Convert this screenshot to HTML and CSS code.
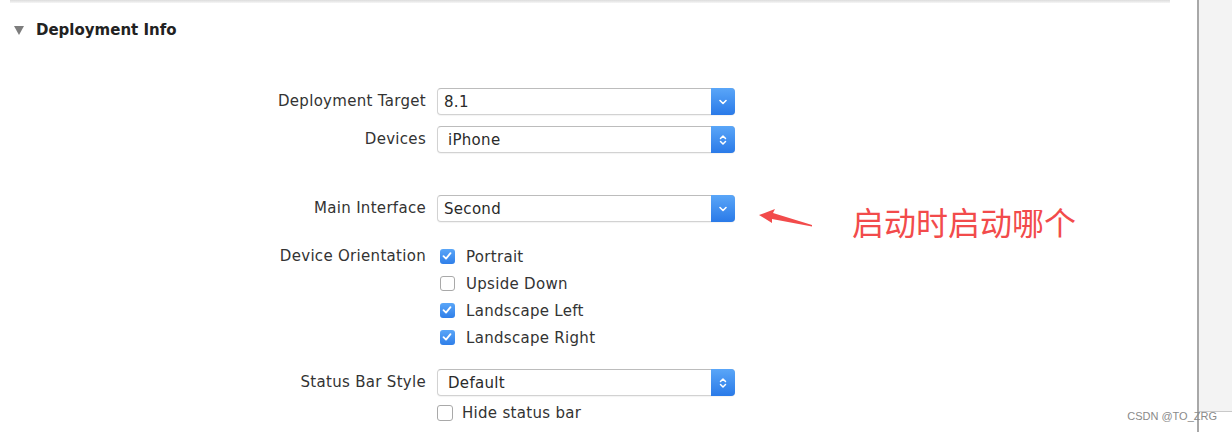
FILE: index.html
```html
<!DOCTYPE html>
<html lang="zh-CN">
<head>
    <meta charset="UTF-8">
    <meta name="viewport" content="width=device-width, initial-scale=1.0">
    <title>Deployment Info</title>
    <link rel="stylesheet" href="styles.css">
</head>
<body>
    <div class="page">
        <div class="main">
            <div class="topline"></div>
            <div class="section-head">
                <span class="disclosure"></span>
                <span class="section-title">Deployment Info</span>
            </div>

            <div class="form">
                <div class="row row-first">
                    <label class="label">Deployment Target</label>
                    <div class="select">
                        <span class="select-value">8.1</span>
                        <span class="select-btn">
                            <svg width="10" height="8" viewBox="0 0 10 8"><path d="M2 2.5 L5 5.5 L8 2.5" fill="none" stroke="#fff" stroke-width="1.6" stroke-linecap="round" stroke-linejoin="round"/></svg>
                        </span>
                    </div>
                </div>

                <div class="row row-tight">
                    <label class="label">Devices</label>
                    <div class="select">
                        <span class="select-value value-wide">iPhone</span>
                        <span class="select-btn">
                            <svg width="10" height="14" viewBox="0 0 10 14"><path d="M2.5 5.5 L5 3 L7.5 5.5 M2.5 8.5 L5 11 L7.5 8.5" fill="none" stroke="#fff" stroke-width="1.5" stroke-linecap="round" stroke-linejoin="round"/></svg>
                        </span>
                    </div>
                </div>

                <div class="row row-wide">
                    <label class="label">Main Interface</label>
                    <div class="select">
                        <span class="select-value">Second</span>
                        <span class="select-btn">
                            <svg width="10" height="8" viewBox="0 0 10 8"><path d="M2 2.5 L5 5.5 L8 2.5" fill="none" stroke="#fff" stroke-width="1.6" stroke-linecap="round" stroke-linejoin="round"/></svg>
                        </span>
                    </div>
                    <div class="note">
                        <svg class="note-arrow" width="60" height="30" viewBox="0 0 60 30">
                            <polygon points="4,13 20,7 18,11 57,23 57,24.5 17,17 17,21" fill="#f24b4b"/>
                        </svg>
                        <span class="note-text">启动时启动哪个</span>
                    </div>
                </div>

                <div class="row row-orient">
                    <label class="label">Device Orientation</label>
                    <div class="checks">
                        <div class="check"><span class="box checked"><svg width="14" height="14" viewBox="0 0 14 14"><path d="M3.5 7.2 L6 9.6 L10.5 4.2" fill="none" stroke="#fff" stroke-width="1.8" stroke-linecap="round" stroke-linejoin="round"/></svg></span>Portrait</div>
                        <div class="check"><span class="box"></span>Upside Down</div>
                        <div class="check"><span class="box checked"><svg width="14" height="14" viewBox="0 0 14 14"><path d="M3.5 7.2 L6 9.6 L10.5 4.2" fill="none" stroke="#fff" stroke-width="1.8" stroke-linecap="round" stroke-linejoin="round"/></svg></span>Landscape Left</div>
                        <div class="check"><span class="box checked"><svg width="14" height="14" viewBox="0 0 14 14"><path d="M3.5 7.2 L6 9.6 L10.5 4.2" fill="none" stroke="#fff" stroke-width="1.8" stroke-linecap="round" stroke-linejoin="round"/></svg></span>Landscape Right</div>
                    </div>
                </div>

                <div class="row row-status">
                    <label class="label">Status Bar Style</label>
                    <div class="select">
                        <span class="select-value value-wide">Default</span>
                        <span class="select-btn">
                            <svg width="10" height="14" viewBox="0 0 10 14"><path d="M2.5 5.5 L5 3 L7.5 5.5 M2.5 8.5 L5 11 L7.5 8.5" fill="none" stroke="#fff" stroke-width="1.5" stroke-linecap="round" stroke-linejoin="round"/></svg>
                        </span>
                    </div>
                </div>

                <div class="row row-hide">
                    <span class="label"></span>
                    <div class="check check-hide"><span class="box"></span>Hide status bar</div>
                </div>
            </div>
        </div>

        <div class="side">
            <div class="side-panel"></div>
        </div>
    </div>
    <div class="watermark">CSDN @TO_ZRG</div>
</body>
</html>
```

FILE: styles.css
```css
body {
    margin: 0;
    background-color: #fff;
    font-family: "DejaVu Sans", Verdana, sans-serif;
    color: #333;
    overflow: hidden;
}
.page {
    display: flex;
    height: 432px;
}
.main {
    flex: 0 0 1197px;
}
.topline {
    height: 3px;
    margin-left: 10px;
    width: 1160px;
    background: linear-gradient(#dcdcdc, #f6f6f6);
}
.section-head {
    display: flex;
    align-items: center;
    height: 24px;
    margin-top: 15px;
    padding-left: 14px;
}
.disclosure {
    width: 0;
    height: 0;
    border-left: 5px solid transparent;
    border-right: 5px solid transparent;
    border-top: 9px solid #7d7d7d;
    margin-right: 12px;
    margin-top: 1px;
}
.section-title {
    font-size: 15px;
    font-weight: bold;
    color: #222;
}
.form {
    margin-top: 46px;
}
.row {
    display: flex;
    align-items: center;
    height: 27px;
}
.row-tight {
    margin-top: 11px;
}
.row-wide {
    margin-top: 42px;
}
.row-orient {
    margin-top: 21px;
    align-items: flex-start;
    height: auto;
}
.row-status {
    margin-top: 18px;
}
.row-hide {
    margin-top: 3px;
}
.label {
    flex: 0 0 426px;
    margin-right: 11px;
    text-align: right;
    font-size: 15px;
    letter-spacing: 0.3px;
    line-height: 27px;
    color: #333;
}
.select {
    display: flex;
    align-items: center;
    width: 298px;
    height: 27px;
    box-sizing: border-box;
    border: 1px solid #d2d2d2;
    border-top-color: #bcbcbc;
    border-radius: 4px;
    background-color: #fff;
    box-shadow: 0 1px 1px rgba(0, 0, 0, 0.05);
}
.select-value {
    flex: 1;
    padding-left: 6px;
    font-size: 15px;
    letter-spacing: 0.3px;
    color: #2a2a2a;
}
.value-wide {
    padding-left: 10px;
}
.select-btn {
    display: flex;
    align-items: center;
    justify-content: center;
    width: 24px;
    height: 27px;
    margin-right: -1px;
    margin-top: -1px;
    margin-bottom: -1px;
    border-radius: 0 4px 4px 0;
    background: linear-gradient(#5aa6f8, #2a7ae8);
}
.note {
    display: flex;
    align-items: flex-start;
    align-self: flex-start;
    height: 27px;
}
.note-arrow {
    margin-left: 20px;
    margin-top: 7px;
}
.note-text {
    margin-left: 37px;
    margin-top: 10px;
    font-family: "Noto Sans CJK SC", sans-serif;
    font-size: 32px;
    line-height: 32px;
    color: #f24b4b;
}
.checks {
    padding-left: 3px;
}
.check {
    display: flex;
    align-items: center;
    height: 27px;
    font-size: 15px;
    letter-spacing: 0.3px;
    color: #333;
}
.box {
    display: inline-flex;
    width: 15px;
    height: 15px;
    box-sizing: border-box;
    border: 1px solid #a9a9a9;
    border-radius: 3px;
    background-color: #fff;
    margin-right: 11px;
}
.box.checked {
    border: none;
    background: linear-gradient(#5aa6f8, #2f7fe9);
}
.check-hide .box {
    width: 16px;
    height: 16px;
    margin-right: 9px;
}
.side {
    flex: 1;
    border-left: 2px solid #a8a8a8;
}
.side-panel {
    height: 411px;
    background-color: #f3f3f3;
    border-bottom: 1px solid #c9c9c9;
}
.watermark {
    position: absolute;
    right: 15px;
    bottom: 10px;
    font-family: "Liberation Sans", Arial, sans-serif;
    font-size: 11px;
    color: #8a8a8a;
}
```
